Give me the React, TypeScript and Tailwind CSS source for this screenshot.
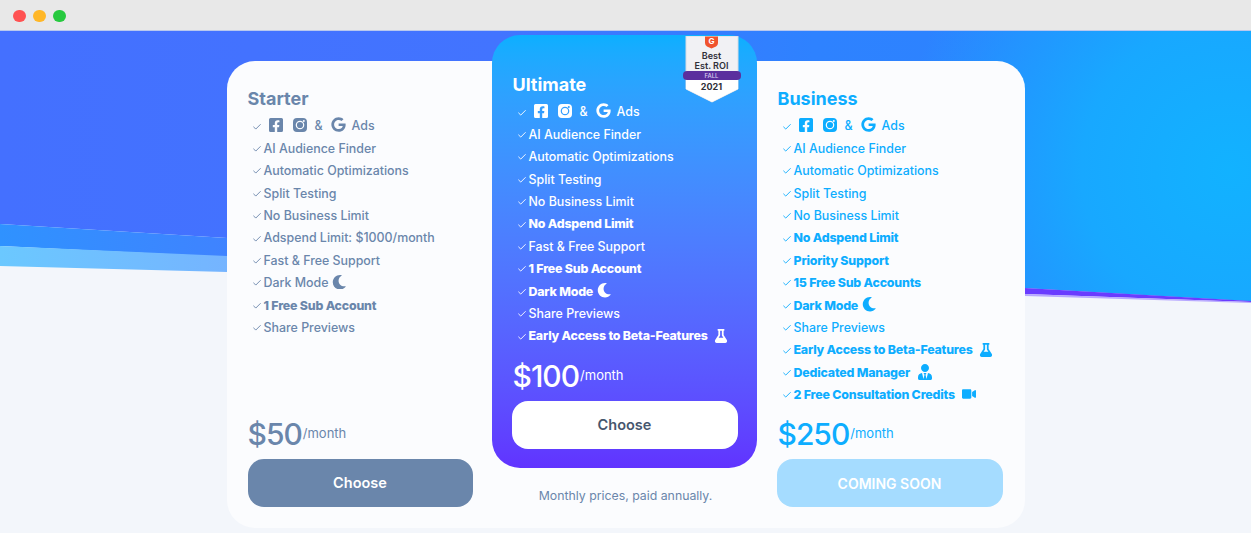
import React from "react";
import { Check } from "lucide-react";
import { FaFacebookSquare, FaGoogle, FaMoon, FaFlask, FaUserTie, FaVideo } from "react-icons/fa";

type Row = { t: string; b?: boolean; icon?: "moon" | "flask" | "user" | "video" };

const starter: Row[] = [
  { t: "AI Audience Finder" },
  { t: "Automatic Optimizations" },
  { t: "Split Testing" },
  { t: "No Business Limit" },
  { t: "Adspend Limit: $1000/month" },
  { t: "Fast & Free Support" },
  { t: "Dark Mode", icon: "moon" },
  { t: "1 Free Sub Account", b: true },
  { t: "Share Previews" },
];
const ultimate: Row[] = [
  { t: "AI Audience Finder" },
  { t: "Automatic Optimizations" },
  { t: "Split Testing" },
  { t: "No Business Limit" },
  { t: "No Adspend Limit", b: true },
  { t: "Fast & Free Support" },
  { t: "1 Free Sub Account", b: true },
  { t: "Dark Mode", b: true, icon: "moon" },
  { t: "Share Previews" },
  { t: "Early Access to Beta-Features", b: true, icon: "flask" },
];
const business: Row[] = [
  { t: "AI Audience Finder" },
  { t: "Automatic Optimizations" },
  { t: "Split Testing" },
  { t: "No Business Limit" },
  { t: "No Adspend Limit", b: true },
  { t: "Priority Support", b: true },
  { t: "15 Free Sub Accounts", b: true },
  { t: "Dark Mode", b: true, icon: "moon" },
  { t: "Share Previews" },
  { t: "Early Access to Beta-Features", b: true, icon: "flask" },
  { t: "Dedicated Manager", b: true, icon: "user" },
  { t: "2 Free Consultation Credits", b: true, icon: "video" },
];

function Extra({ icon }: { icon?: Row["icon"] }) {
  if (icon === "moon") return <FaMoon className="ml-[4px] -mt-[3px] text-[14.5px]" />;
  if (icon === "flask") return <FaFlask className="ml-[6px] -mt-[2px] text-[14px]" />;
  if (icon === "user") return <FaUserTie className="ml-[7px] -mt-[1px] text-[16px]" />;
  if (icon === "video") return <FaVideo className="ml-[7px] -mt-[3px] text-[14px]" />;
  return null;
}

function Insta() {
  return (
    <svg viewBox="0 0 14 14" className="ml-[9px] -mt-[3px] h-[14px] w-[14px]" fill="currentColor">
      <path
        fillRule="evenodd"
        d="M4 0H10A4 4 0 0 1 14 4V10A4 4 0 0 1 10 14H4A4 4 0 0 1 0 10V4A4 4 0 0 1 4 0Z
           M7 2.7A4.3 4.3 0 1 0 7 11.3A4.3 4.3 0 1 0 7 2.7Z
           M7 3.9A3.1 3.1 0 1 1 7 10.1A3.1 3.1 0 1 1 7 3.9Z
           M10.8 2.1A1 1 0 1 0 10.8 4.1A1 1 0 1 0 10.8 2.1Z"
      />
    </svg>
  );
}

function AdsRow({ checkClass }: { checkClass: string }) {
  return (
    <li className="flex h-[22.4px] items-center whitespace-nowrap">
      <Check className={`ml-[4px] mr-[2px] h-[10px] w-[10px] shrink-0 ${checkClass}`} strokeWidth={2.2} />
      <FaFacebookSquare className="ml-[4px] -mt-[3px] text-[16px]" />
      <Insta />
      <span className="ml-[8px] font-medium">&amp;</span>
      <FaGoogle className="ml-[8px] -mt-[4px] text-[15px]" />
      <span className="ml-[6px] font-medium">Ads</span>
    </li>
  );
}

function Features({ rows, checkClass }: { rows: Row[]; checkClass: string }) {
  return (
    <ul className="text-[12.4px]">
      <AdsRow checkClass={checkClass} />
      {rows.map((r) => (
        <li key={r.t} className="flex h-[22.4px] items-center whitespace-nowrap">
          <Check className={`ml-[4px] mr-[2px] h-[10px] w-[10px] shrink-0 ${checkClass}`} strokeWidth={2.2} />
          <span className={r.b ? "font-extrabold tracking-[-0.2px]" : "font-medium"}>{r.t}</span>
          <Extra icon={r.icon} />
        </li>
      ))}
    </ul>
  );
}

function Price({ v }: { v: string }) {
  return (
    <div className="flex h-[40px] items-center">
      <span className="text-[30px] font-medium leading-none tracking-[-1px]">{v}</span>
      <span className="ml-[1px] text-[13px]">/month</span>
    </div>
  );
}

function Badge() {
  return (
    <div className="absolute left-[191px] top-[1px] h-[67px] w-[58px] text-[#2f2f38]">
      <svg viewBox="0 0 58 67" className="absolute inset-0 h-full w-full">
        <polygon points="3,0 55,0 55,53 29,66 3,53" fill="#f1f1f4" stroke="#d8dbe2" strokeWidth="1" />
        <polygon points="3,43 55,43 55,53 29,66 3,53" fill="#ffffff" />
        <path d="M22,0.5 H35 V7 Q35,9.5 33,10.5 L28.5,12.5 L24,10.5 Q22,9.5 22,7 Z" fill="#f0532d" />
        <rect x="0" y="35" width="58" height="9" rx="4" fill="#5b2f9e" />
      </svg>
      <div className="absolute inset-0 flex flex-col items-center">
        <span className="h-[11px] text-[8px] font-bold leading-[11px] text-white">G</span>
        <span className="mt-[4px] h-[10px] text-[9px] font-semibold leading-[10px]">Best</span>
        <span className="h-[9px] text-[9px] font-semibold leading-[9px]">Est. ROI</span>
        <span className="mt-[1px] h-[9px] text-[6px] font-medium leading-[9px] text-[#d9cdf0]">FALL</span>
        <span className="mt-[1px] h-[12px] text-[9px] font-bold leading-[12px]">2021</span>
      </div>
    </div>
  );
}

export default function App() {
  return (
    <div className="relative h-[533px] w-full overflow-hidden bg-[#f3f6fb] font-['Inter',sans-serif]">
      <div className="relative z-10 flex h-[31px] items-center gap-[7.5px] border-b border-[#b9c8ee] bg-[#e8e8e8] pl-[13px] pt-[2px]">
        <span className="h-[12.5px] w-[12.5px] rounded-full bg-[#ff5252]" />
        <span className="h-[12.5px] w-[12.5px] rounded-full bg-[#ffb727]" />
        <span className="h-[12.5px] w-[12.5px] rounded-full bg-[#27c93f]" />
      </div>

      <svg className="absolute left-0 top-0 h-[533px] w-[1251px]" viewBox="0 0 1251 533">
        <defs>
          <linearGradient id="hero" x1="0" y1="0" x2="1251" y2="0" gradientUnits="userSpaceOnUse">
            <stop offset="0" stopColor="#4470ff" />
            <stop offset="0.4" stopColor="#4274ff" />
            <stop offset="0.65" stopColor="#2e82ff" />
            <stop offset="1" stopColor="#2a84ff" />
          </linearGradient>
          <radialGradient id="glow" cx="1230" cy="170" r="330" gradientUnits="userSpaceOnUse">
            <stop offset="0" stopColor="#12b2ff" />
            <stop offset="0.45" stopColor="#18a8ff" />
            <stop offset="1" stopColor="#18a8ff" stopOpacity="0" />
          </radialGradient>
          <linearGradient id="light" x1="0" y1="0" x2="227" y2="0" gradientUnits="userSpaceOnUse">
            <stop offset="0" stopColor="#6bc8ff" />
            <stop offset="1" stopColor="#75b4ff" />
          </linearGradient>
          <linearGradient id="mid" x1="0" y1="0" x2="227" y2="0" gradientUnits="userSpaceOnUse">
            <stop offset="0" stopColor="#2f92ff" />
            <stop offset="1" stopColor="#3f83ff" />
          </linearGradient>
        </defs>
        <polygon points="0,31 1251,31 1251,301 1025,288 227,238 0,224" fill="url(#hero)" />
        <polygon points="0,31 1251,31 1251,301 1025,288 227,238 0,224" fill="url(#glow)" />
        <polygon points="0,224 227,238 227,257 0,246" fill="url(#mid)" />
        <polygon points="0,246 227,256 227,272 0,266" fill="url(#light)" />
        <polygon points="1025,288 1251,301 1251,302 1025,294" fill="#6a3cff" />
        <polygon points="1025,294 1251,302 1251,303 1025,296" fill="#b7a8ff" />
      </svg>

      <main className="relative mx-auto mt-[30px] flex h-[467px] w-[798px] rounded-[28px] bg-[#fbfcfe]">
        <section className="flex w-[265px] flex-col pb-[21px] pl-[21px] pr-[19px] pt-[24px] text-[#6a86ab]">
          <h2 className="mb-[2.5px] h-[28px] text-[18px] font-bold leading-[28px]">Starter</h2>
          <Features rows={starter} checkClass="text-[#6a86ab]" />
          <div className="mt-auto mb-[5px]"><Price v="$50" /></div>
          <button className="h-[48px] w-[225px] rounded-[16px] bg-[#6a86ab] text-[14.5px] font-semibold text-white">Choose</button>
        </section>

        <div className="-mt-[26px] flex w-[265px] flex-col items-center">
          <section className="relative flex h-[433px] w-full flex-col rounded-[28px] bg-gradient-to-b from-[#0bafff] to-[#6133ff] pb-[19px] pl-[20px] pr-[19px] pt-[36px] text-white">
            <Badge />
            <h2 className="mb-[2.5px] h-[28px] pl-[1px] text-[18px] font-bold leading-[28px]">Ultimate</h2>
            <div className="pl-[1px]"><Features rows={ultimate} checkClass="text-white" /></div>
            <div className="mt-auto mb-[5px] pl-[1px]"><Price v="$100" /></div>
            <button className="h-[48px] w-[226px] rounded-[16px] bg-white text-[14.5px] font-semibold text-[#46566e]">Choose</button>
          </section>
          <p className="mt-[19px] pl-[3px] text-[12.3px] leading-[18px] text-[#6a86ab]">Monthly prices, paid annually.</p>
        </div>

        <section className="flex w-[268px] flex-col pb-[21px] pl-[20px] pr-[22px] pt-[24px] text-[#0dadff]">
          <h2 className="mb-[2.5px] h-[28px] pl-[1px] text-[18px] font-bold leading-[28px]">Business</h2>
          <div className="pl-[1px]"><Features rows={business} checkClass="text-[#0dadff]" /></div>
          <div className="mt-auto mb-[5px] pl-[1px]"><Price v="$250" /></div>
          <button className="h-[48px] w-[226px] rounded-[16px] bg-[#a5dcff] text-[14px] font-semibold text-white">COMING SOON</button>
        </section>
      </main>
    </div>
  );
}
